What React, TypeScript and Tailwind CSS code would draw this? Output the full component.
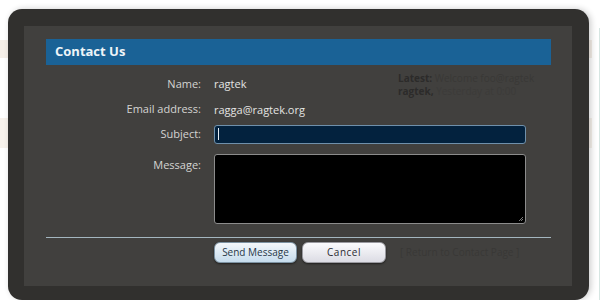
const font = { fontFamily: '"Open Sans", "DejaVu Sans", sans-serif' }

function Row({ label, children, h, top = false }: { label: string; children: React.ReactNode; h: string; top?: boolean }) {
  return (
    <div className={`flex ${h} ${top ? 'items-start' : 'items-center'}`}>
      <div className={`w-[155px] shrink-0 text-right text-[11px] text-[#d4d4d2] ${top ? 'pt-[3px]' : ''}`}>{label}</div>
      <div className="ml-[13px] flex-1">{children}</div>
    </div>
  )
}

export default function App() {
  return (
    <div className="relative w-[608px] h-[300px] overflow-hidden bg-white" style={font}>
      {/* page behind the overlay */}
      <div className="flex flex-col pt-[40px] pr-[16px]">
        <div className="h-[18px] bg-[#f5efe8]" />
        <div className="h-[60px]" />
        <div className="h-[30px] bg-[#f7f2ec]" />
      </div>
      <div className="absolute right-[8px] top-[28px] bottom-0 w-[1px] bg-[#d6e6e2]" />

      {/* dialog */}
      <div className="absolute left-[8px] top-[9px] w-[581px] h-[291px] rounded-[14px] bg-[#31302e] pl-[16px] pt-[17px] shadow-[2px_0_6px_rgba(0,0,0,0.2)]">
        <div className="relative w-[548px] h-[260px] bg-[#41403e] px-[22px] pt-[13px]">
          <div className="h-[26px] w-[505px] bg-[#1a6296] flex items-center px-[9px]">
            <span className="text-[13px] font-bold text-[#eef4f8]">Contact Us</span>
          </div>

          {/* faint content showing through */}
          <div className="absolute left-[374px] top-[46px] text-[10px] leading-[13px] text-[#393836]">
            <div><span className="font-bold text-[#2c2b2a]">Latest:</span> Welcome foo@ragtek</div>
            <div><span className="font-bold text-[#2c2b2a]">ragtek,</span> <span className="text-[#3c3b39]">Yesterday at 0:00</span></div>
          </div>

          <div className="w-[505px] pt-[7px]">
            <Row label="Name:" h="h-[25px]">
              <span className="text-[11px] text-[#e4e4e2] relative top-[-3px]">ragtek</span>
            </Row>
            <Row label="Email address:" h="h-[25px]">
              <span className="text-[11px] text-[#e4e4e2] relative top-[-2px]">ragga@ragtek.org</span>
            </Row>
            <Row label="Subject:" h="h-[24px]">
              <div className="w-[312px] h-[19px] rounded-[3px] border border-[#6f90ab] bg-[#03223e] flex items-center pl-[3px]">
                <div className="w-[1px] h-[12px] bg-[#e8eef4]" />
              </div>
            </Row>
            <div className="h-[8px]" />
            <Row label="Message:" h="h-[70px]" top>
              <div className="relative w-[312px] h-[70px] rounded-[3px] border border-[#8c8c8c] bg-black">
                <svg className="absolute right-[1px] bottom-[1px]" width="6" height="6" viewBox="0 0 6 6">
                  <path d="M5 1 L1 5 M5 3 L3 5" stroke="#9a9a9a" strokeWidth="0.8" />
                </svg>
              </div>
            </Row>
          </div>

          <div className="mt-[13px] h-[1px] w-[505px] bg-[#a4b6bf]" />

          <div className="flex items-center pl-[168px] pt-[4px] gap-[5px]">
            <button className="w-[83px] h-[21px] rounded-[6px] border border-[#7d93a3] bg-gradient-to-b from-[#f4f8fb] to-[#c6dced] text-[10px] text-[#283848] shadow-[0_1px_2px_rgba(0,0,0,0.5)]">
              Send Message
            </button>
            <button className="w-[84px] h-[21px] rounded-[6px] border border-[#9a9aa0] bg-gradient-to-b from-[#fbfbfd] to-[#dcdce4] text-[10px] text-[#2a2a30] tracking-[0.5px] shadow-[0_1px_2px_rgba(0,0,0,0.5)]">
              Cancel
            </button>
            <span className="ml-[9px] text-[10px] text-[#393836]">[ Return to Contact Page ]</span>
          </div>
        </div>
      </div>
    </div>
  )
}
